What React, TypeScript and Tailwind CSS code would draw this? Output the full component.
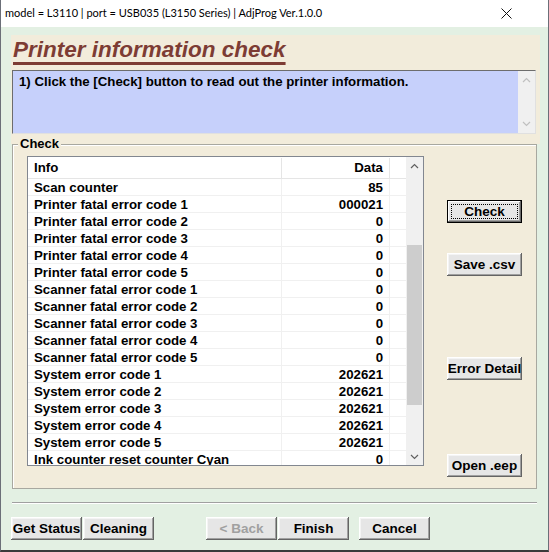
import React from "react";

const rows: [string, string][] = [
  ["Scan counter", "85"],
  ["Printer fatal error code 1", "000021"],
  ["Printer fatal error code 2", "0"],
  ["Printer fatal error code 3", "0"],
  ["Printer fatal error code 4", "0"],
  ["Printer fatal error code 5", "0"],
  ["Scanner fatal error code 1", "0"],
  ["Scanner fatal error code 2", "0"],
  ["Scanner fatal error code 3", "0"],
  ["Scanner fatal error code 4", "0"],
  ["Scanner fatal error code 5", "0"],
  ["System error code 1", "202621"],
  ["System error code 2", "202621"],
  ["System error code 3", "202621"],
  ["System error code 4", "202621"],
  ["System error code 5", "202621"],
  ["Ink counter reset counter Cyan", "0"],
];

const font = { fontFamily: '"Liberation Sans", Arial, sans-serif' };

function Btn({
  children,
  className = "",
  def = false,
  disabled = false,
}: {
  children: React.ReactNode;
  className?: string;
  def?: boolean;
  disabled?: boolean;
}) {
  return (
    <div
      className={
        "relative flex h-[23px] items-center justify-center bg-[#e6e6e6] text-[13.5px] font-bold leading-none " +
        (def
          ? "border border-black shadow-[inset_-1px_-1px_#696969,inset_1px_1px_#ffffff,inset_-2px_-2px_#a0a0a0] "
          : "shadow-[inset_-1px_-1px_#646464,inset_1px_1px_#ffffff,inset_-2px_-2px_#a0a0a0,inset_2px_2px_#f4f4f4] ") +
        (disabled ? "text-[#a0a0a0] " : "text-black ") +
        className
      }
      style={font}
    >
      {def && (
        <div className="absolute inset-[3px] border border-dotted border-black" />
      )}
      <span className="relative">{children}</span>
    </div>
  );
}

function Chevron({ up, color = "#606060" }: { up: boolean; color?: string }) {
  return (
    <svg width="9" height="6" viewBox="0 0 9 6">
      <path
        d={up ? "M1 5 L4.5 1.5 L8 5" : "M1 1 L4.5 4.5 L8 1"}
        fill="none"
        stroke={color}
        strokeWidth="1.2"
      />
    </svg>
  );
}

export default function App() {
  return (
    <div className="flex h-[552px] w-[549px] flex-col overflow-hidden border-x border-b-2 border-x-[#6b6f78] border-b-[#3a3a3a] bg-[#e3f0e3]">
      {/* Title bar */}
      <div className="flex h-[27px] shrink-0 items-center justify-between bg-white pl-[4px] pr-[36px]">
        <span
          className="text-[11px] text-black"
          style={{ fontFamily: 'Lato, "Noto Sans", sans-serif' }}
        >
          model = L3110 | port = USB035 (L3150 Series) | AdjProg Ver.1.0.0
        </span>
        <svg width="11" height="11" viewBox="0 0 11 11">
          <path d="M0.5 0.5 L10.5 10.5 M10.5 0.5 L0.5 10.5" stroke="#111" strokeWidth="1" />
        </svg>
      </div>

      {/* Top panel */}
      <div className="ml-[10px] mt-[8px] h-[109px] w-[529px] bg-[#f2ecdb]" style={font}>
        <div className="h-[35px] pl-[2px] pt-[1px]">
          <span className="text-[22.5px] font-bold italic leading-[28px] text-[#7d3c34] underline decoration-[3px] underline-offset-[5px]">
            Printer information check
          </span>
        </div>
        <div className="ml-[1px] flex h-[64px] w-[524px] border border-b-[#e0e0e0] border-l-[#6d6d6d] border-r-[#e0e0e0] border-t-[#6d6d6d] bg-[#c6d0fb]">
          <div className="flex-1 pl-[6px] pt-[3px] text-[13.25px] font-bold leading-[15px] text-black">
            1) Click the [Check] button to read out the printer information.
          </div>
          <div className="flex w-[17px] flex-col items-center justify-between bg-[#f0f0f0] py-[6px]">
            <Chevron up color="#c0c0c0" />
            <Chevron up={false} color="#c0c0c0" />
          </div>
        </div>
      </div>

      {/* Group box */}
      <div
        className="relative ml-[11px] flex h-[345px] w-[525px] border border-[#a8a8a0] bg-[#f2ecdb] shadow-[inset_1px_1px_#ffffff]"
        style={font}
      >
        <div className="absolute left-[5px] top-[-9px] bg-[#f2ecdb] px-[2px] text-[13px] font-bold leading-[15px] text-black">
          Check
        </div>
        {/* List view */}
        <div className="ml-[14px] mt-[11px] flex h-[310px] w-[397px] border border-[#828790] bg-white">
          <div className="flex flex-1 flex-col overflow-hidden">
            <div className="flex h-[22px] shrink-0 border-b border-[#e5e5e5] pt-[1px] text-[13.25px] font-bold text-black">
              <div className="flex w-[254px] items-center border-r border-[#e5e5e5] pl-[6px]">Info</div>
              <div className="flex w-[108px] items-center justify-end border-r border-[#e5e5e5] pr-[6px]">Data</div>
            </div>
            <div className="flex flex-col">
              {rows.map(([k, v], i) => (
                <div key={i} className="flex h-[17px] shrink-0 border-b border-[#f0f0f0] text-[13.25px] font-bold leading-[18px] text-black">
                  <div className="w-[254px] overflow-hidden whitespace-nowrap border-r border-[#f0f0f0] pl-[6px]">{k}</div>
                  <div className="w-[108px] border-r border-[#f0f0f0] pr-[6px] text-right">{v}</div>
                </div>
              ))}
            </div>
          </div>
          <div className="flex w-[17px] shrink-0 flex-col items-center bg-[#f0f0f0]">
            <div className="flex h-[17px] items-center justify-center">
              <Chevron up />
            </div>
            <div className="mt-[71px] h-[160px] w-[15px] bg-[#cdcdcd]" />
            <div className="mt-auto flex h-[17px] items-center justify-center">
              <Chevron up={false} />
            </div>
          </div>
        </div>
        {/* Right buttons */}
        <div className="ml-[23px] flex flex-col">
          <Btn def className="mt-[55px] w-[75px]">Check</Btn>
          <Btn className="mt-[30px] w-[75px]">Save .csv</Btn>
          <Btn className="mt-[81px] w-[75px]">Error Detail</Btn>
          <Btn className="mt-[74px] w-[75px]">Open .eep</Btn>
        </div>
      </div>

      {/* Separator */}
      <div className="ml-[11px] mt-[13px] h-[2px] w-[525px] border-t border-b border-t-[#a0a0a0] border-b-white" />

      {/* Bottom buttons */}
      <div className="ml-[10px] mt-[13px] flex">
        <Btn className="w-[71px]">Get Status</Btn>
        <Btn className="ml-[1px] w-[71px]">Cleaning</Btn>
        <Btn disabled className="ml-[52px] w-[71px]">&lt; Back</Btn>
        <Btn className="ml-[1px] w-[71px]">Finish</Btn>
        <Btn className="ml-[10px] w-[71px]">Cancel</Btn>
      </div>
    </div>
  );
}
